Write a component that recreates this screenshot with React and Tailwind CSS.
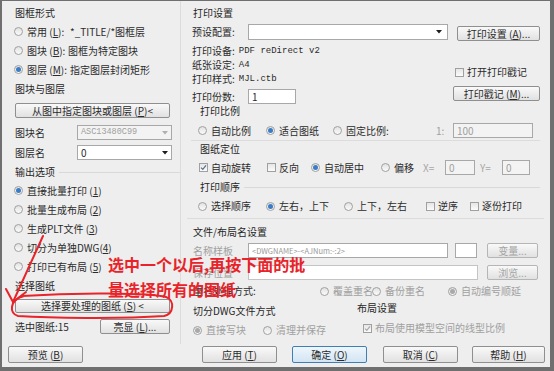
import React from "react";

const F = "font-['Noto_Sans_CJK_SC','Noto_Sans',sans-serif]";
const MONO = "font-['Liberation_Mono',monospace]";

function Radio({ checked, disabled, children, className = "" }) {
  return (
    <div className={`flex items-center shrink-0 ${className}`}>
      <span className="w-[9px] h-[9px] rounded-full border border-[#a0a0a0] bg-linear-to-b from-[#e2e2e2] to-[#fbfbfb] flex items-center justify-center shrink-0">
        {checked && (
          <span className={`w-[5px] h-[5px] rounded-full ${disabled ? "bg-[#a9a9a9]" : "bg-[#3a7cc6]"}`} />
        )}
      </span>
      <span className={`ml-[4px] whitespace-nowrap ${disabled ? "text-[#a0a0a0]" : ""}`}>{children}</span>
    </div>
  );
}

function Check({ checked, disabled, children, className = "" }) {
  return (
    <div className={`flex items-center shrink-0 ${className}`}>
      <span className="w-[9px] h-[9px] border border-[#a0a0a0] bg-linear-to-b from-[#e6e6e6] to-[#fbfbfb] flex items-center justify-center shrink-0">
        {checked && (
          <svg width="7" height="7" viewBox="0 0 7 7">
            <path d="M1 3.6 L2.8 5.4 L6 1.4" stroke={disabled ? "#a8a8a8" : "#56708c"} strokeWidth="1.2" fill="none" />
          </svg>
        )}
      </span>
      <span className={`ml-[3px] whitespace-nowrap ${disabled ? "text-[#a0a0a0]" : ""}`}>{children}</span>
    </div>
  );
}

function Btn({ children, className = "", primary, disabled }) {
  return (
    <div
      className={`flex items-center justify-center shrink-0 rounded-[2px] border whitespace-nowrap ${
        primary
          ? "border-[#3f7fb3] bg-linear-to-b from-[#eef6fc] to-[#d3e5f3]"
          : "border-[#8f8f8f] bg-linear-to-b from-[#f9f9f9] to-[#e1e1e1]"
      } ${disabled ? "text-[#a5a5a5] border-[#b5b5b5]" : ""} ${className}`}
    >
      {children}
    </div>
  );
}

function Arrow({ color = "#1e1e1e" }) {
  return (
    <svg width="6" height="4" viewBox="0 0 6 4" className="shrink-0">
      <path d="M0 0 H6 L3 3.5 Z" fill={color} />
    </svg>
  );
}

function Input({ className = "", children, disabled }) {
  return (
    <div
      className={`flex items-center shrink-0 border border-[#a8a8a8] px-[3px] ${
        disabled ? "bg-[#f3f3f3] text-[#a0a0a0]" : "bg-white"
      } ${className}`}
    >
      {children}
    </div>
  );
}

function Heading({ children, className = "", line }) {
  return (
    <div className={`flex items-center shrink-0 ${className}`}>
      <span className="whitespace-nowrap text-[#262626]">{children}</span>
      {line && <span className="flex-1 h-px bg-[#d9d9d9] ml-[4px]" />}
    </div>
  );
}

function LeftCol() {
  return (
    <div className="w-[179px] shrink-0 pl-[12px] pt-[2px] flex flex-col border-r border-[#dcdcdc]">
      <Heading className="h-[19px] pl-[1px]">图框形式</Heading>
      <Radio className="h-[19px]">
        <span className="inline-block w-[43px]">常用 (<u>L</u>):</span>
        <span>*_TITLE/*图框层</span>
      </Radio>
      <Radio className="h-[19px]">
        <span className="inline-block w-[41px]">图块 (<u>B</u>):</span>
        <span>图框为特定图块</span>
      </Radio>
      <Radio className="h-[19px]" checked>
        <span className="inline-block w-[43px]">图层 (<u>M</u>):</span>
        <span>指定图层封闭矩形</span>
      </Radio>
      <Heading className="h-[19px] pl-[1px]">图块与图层</Heading>
      <Btn className="mt-[5px] h-[15px] w-[155px] ml-[1px]">从图中指定图块或图层 (<u>P</u>)&lt;</Btn>
      <div className="flex items-center mt-[7px] h-[15px]">
        <span className="w-[63px] pl-[1px]">图块名</span>
        <Input disabled className="w-[95px] h-[15px] justify-between">
          <span className={`${MONO} text-[8.5px]`}>ASC13480C99</span>
          <Arrow color="#b0b0b0" />
        </Input>
      </div>
      <div className="flex items-center mt-[5px] h-[15px]">
        <span className="w-[63px] pl-[1px]">图层名</span>
        <Input className="w-[95px] h-[15px] justify-between">
          <span>0</span>
          <Arrow />
        </Input>
      </div>
      <Heading className="mt-[3px] h-[18px] pl-[1px]" line>
        输出选项
      </Heading>
      <Radio className="h-[19px]" checked>直接批量打印 (<u>1</u>)</Radio>
      <Radio className="h-[19px]">批量生成布局 (<u>2</u>)</Radio>
      <Radio className="h-[19px]">生成PLT文件 (<u>3</u>)</Radio>
      <Radio className="h-[19px]">切分为单独DWG(<u>4</u>)</Radio>
      <Radio className="h-[19px]">打印已有布局 (<u>5</u>)</Radio>
      <Heading className="h-[20px] pl-[1px]">选择图纸</Heading>
      <Btn className="mt-[3px] h-[14px] w-[155px] ml-[1px]">选择要处理的图纸 (<u>S</u>) &lt;</Btn>
      <div className="flex items-center mt-[6px] h-[15px]">
        <span className="w-[86px] pl-[1px]">选中图纸:15</span>
        <Btn className="w-[70px] h-[15px]">亮显 (<u>L</u>)...</Btn>
      </div>
    </div>
  );
}

function RightCol() {
  return (
    <div className="flex-1 pt-[2px] flex flex-col">
      <Heading className="h-[19px] pl-[12px]">打印设置</Heading>
      <div className="flex items-start mt-[2px] h-[17px]">
        <span className="w-[67px] pl-[11px] h-[16px] flex items-center">预设配置:</span>
        <Input className="w-[200px] h-[16px] justify-end pr-[5px]">
          <Arrow />
        </Input>
        <Btn className="ml-[9px] mt-[2px] w-[83px] h-[15px]">打印设置 (<u>A</u>)...</Btn>
      </div>
      <div className="flex">
        <div className="w-[272px] flex flex-col">
          <div className="mt-[3px] h-[14px] pl-[11px] flex items-center">
            打印设备:<span className={`${MONO} text-[9px] ml-[4px]`}>PDF reDirect v2</span>
          </div>
          <div className="h-[14px] pl-[11px] flex items-center">
            纸张设定:<span className={`${MONO} text-[9px] ml-[4px]`}>A4</span>
          </div>
          <div className="h-[14px] pl-[11px] flex items-center">
            打印样式:<span className={`${MONO} text-[9px] ml-[4px]`}>MJL.ctb</span>
          </div>
          <div className="mt-[3px] h-[15px] flex items-center">
            <span className="w-[67px] pl-[11px]">打印份数:</span>
            <Input className="w-[48px] h-[15px]">1</Input>
          </div>
        </div>
        <div className="flex flex-col">
          <Check className="mt-[25px] h-[12px] ml-[2px]">打开打印戳记</Check>
          <Btn className="mt-[8px] h-[15px] w-[87px]">打印戳记 (<u>M</u>)...</Btn>
        </div>
      </div>
      <Heading className="h-[14px] pl-[19px]">打印比例</Heading>
      <div className="flex items-center mt-[5px] h-[15px] pl-[17px]">
        <Radio className="w-[68px]">自动比例</Radio>
        <Radio className="w-[67px]" checked>适合图纸</Radio>
        <Radio className="w-[103px]">固定比例:</Radio>
        <span className="w-[17px] text-[#a0a0a0]">1:</span>
        <Input disabled className="w-[80px] h-[15px]">100</Input>
      </div>
      <div className="mt-[2px] h-px bg-[#dcdcdc] mx-[10px]" />
      <Heading className="h-[16px] pl-[19px]">图纸定位</Heading>
      <div className="flex items-center mt-[3px] h-[15px] pl-[18px]">
        <Check className="w-[68px]" checked>自动旋转</Check>
        <Check className="w-[44px]">反向</Check>
        <Radio className="w-[70px]" checked>自动居中</Radio>
        <Radio className="w-[42px]">偏移</Radio>
        <span className="w-[22px] text-[#a8a8a8]">X=</span>
        <Input disabled className="w-[30px] h-[15px]">0</Input>
        <span className="ml-[5px] w-[22px] text-[#a8a8a8]">Y=</span>
        <Input disabled className="w-[28px] h-[15px]">0</Input>
      </div>
      <Heading className="mt-[3px] h-[18px] pl-[19px] pr-[10px]" line>
        打印顺序
      </Heading>
      <div className="flex items-center mt-[3px] h-[14px] pl-[17px]">
        <Radio className="w-[68px]">选择顺序</Radio>
        <Radio className="w-[78px]" checked>左右，上下</Radio>
        <Radio className="w-[82px]">上下，左右</Radio>
        <Check className="w-[44px]">逆序</Check>
        <Check>逐份打印</Check>
      </div>
      <div className="mt-[5px] h-px bg-[#dcdcdc] mx-[6px]" />
      <Heading className="mt-[5px] h-[16px] pl-[12px]">文件/布局名设置</Heading>
      <div className="flex items-center mt-[3px] h-[15px]">
        <span className="w-[67px] pl-[12px] text-[#a0a0a0]">名称样板</span>
        <Input className="w-[200px] h-[15px] text-[#9a9a9a] text-[7.5px]">
          &lt;DWGNAME&gt;-&lt;AJNum:-:2&gt;
        </Input>
        <Input className="ml-[7px] w-[22px] h-[15px]" />
        <Btn disabled className="ml-[10px] w-[51px] h-[15px]">变量...</Btn>
      </div>
      <div className="flex items-center mt-[7px] h-[15px]">
        <span className="w-[67px] pl-[12px] text-[#a0a0a0]">保存位置</span>
        <Input className="w-[230px] h-[15px] border-[#c4c4c4]" />
        <Btn disabled className="ml-[9px] w-[51px] h-[15px]">浏览...</Btn>
      </div>
      <div className="flex items-center mt-[4px] h-[14px]">
        <span className="w-[139px] pl-[12px]">重名处理方式:</span>
        <Radio disabled className="w-[52px]">覆盖重名</Radio>
        <Radio disabled className="w-[76px]">备份重名</Radio>
        <Radio disabled checked>自动编号顺延</Radio>
      </div>
      <div className="flex">
        <div className="w-[176px] flex flex-col">
          <Heading className="mt-[5px] h-[16px] pl-[12px]">切分DWG文件方式</Heading>
          <div className="flex items-center mt-[4px] h-[14px] pl-[12px]">
            <Radio disabled checked className="w-[70px]">直接写块</Radio>
            <Radio disabled>清理并保存</Radio>
          </div>
        </div>
        <div className="flex flex-col">
          <Heading className="mt-[2px] h-[16px]">布局设置</Heading>
          <Check disabled checked className="mt-[4px] h-[16px] ml-[6px]">
            布局使用模型空间的线型比例
          </Check>
        </div>
      </div>
    </div>
  );
}

function Annotations() {
  return (
    <>
      <svg className="absolute left-0 top-0 pointer-events-none" width="554" height="371" viewBox="0 0 554 371">
        <g stroke="#e8232a" strokeWidth="2" fill="none" strokeLinecap="round" strokeLinejoin="round">
          <path d="M43 236 L13 302" />
          <path d="M6 289 L13 302 L26 292" />
          <path d="M22 296 C80 292, 150 293, 166 297 C175 300, 174 314, 164 316 C120 319, 50 318, 18 316 C9 314, 9 300, 24 296" />
        </g>
      </svg>
      <div className={`absolute left-[108px] top-[256px] text-[16px] leading-none font-bold text-[#e8232a] whitespace-nowrap ${F}`}>
        选中一个以后,再按下面的批
      </div>
      <div className={`absolute left-[108px] top-[281px] text-[16px] leading-none font-bold text-[#e8232a] whitespace-nowrap ${F}`}>
        量选择所有的图纸
      </div>
    </>
  );
}

export default function App() {
  return (
    <div
      className={`w-[554px] h-[371px] bg-[#6f6f6f] pl-[2px] pt-[1px] pr-[4px] pb-[4px] relative overflow-hidden ${F} text-[10px] leading-none text-[#2b2b2b]`}
    >
      <div className="w-full h-full bg-[#eeeeee] flex flex-col">
        <div className="flex h-[343px]">
          <LeftCol />
          <RightCol />
        </div>
        <div className="flex items-start pt-[2px] pl-[6px]">
          <Btn className="w-[75px] h-[17px]">预览 (<u>B</u>)</Btn>
          <Btn className="ml-[119px] w-[75px] h-[17px]">应用 (<u>T</u>)</Btn>
          <Btn primary className="ml-[15px] w-[75px] h-[17px]">确定 (<u>O</u>)</Btn>
          <Btn className="ml-[16px] w-[75px] h-[17px]">取消 (<u>C</u>)</Btn>
          <Btn className="ml-[14px] w-[73px] h-[17px]">帮助 (<u>H</u>)</Btn>
        </div>
      </div>
      <Annotations />
    </div>
  );
}
